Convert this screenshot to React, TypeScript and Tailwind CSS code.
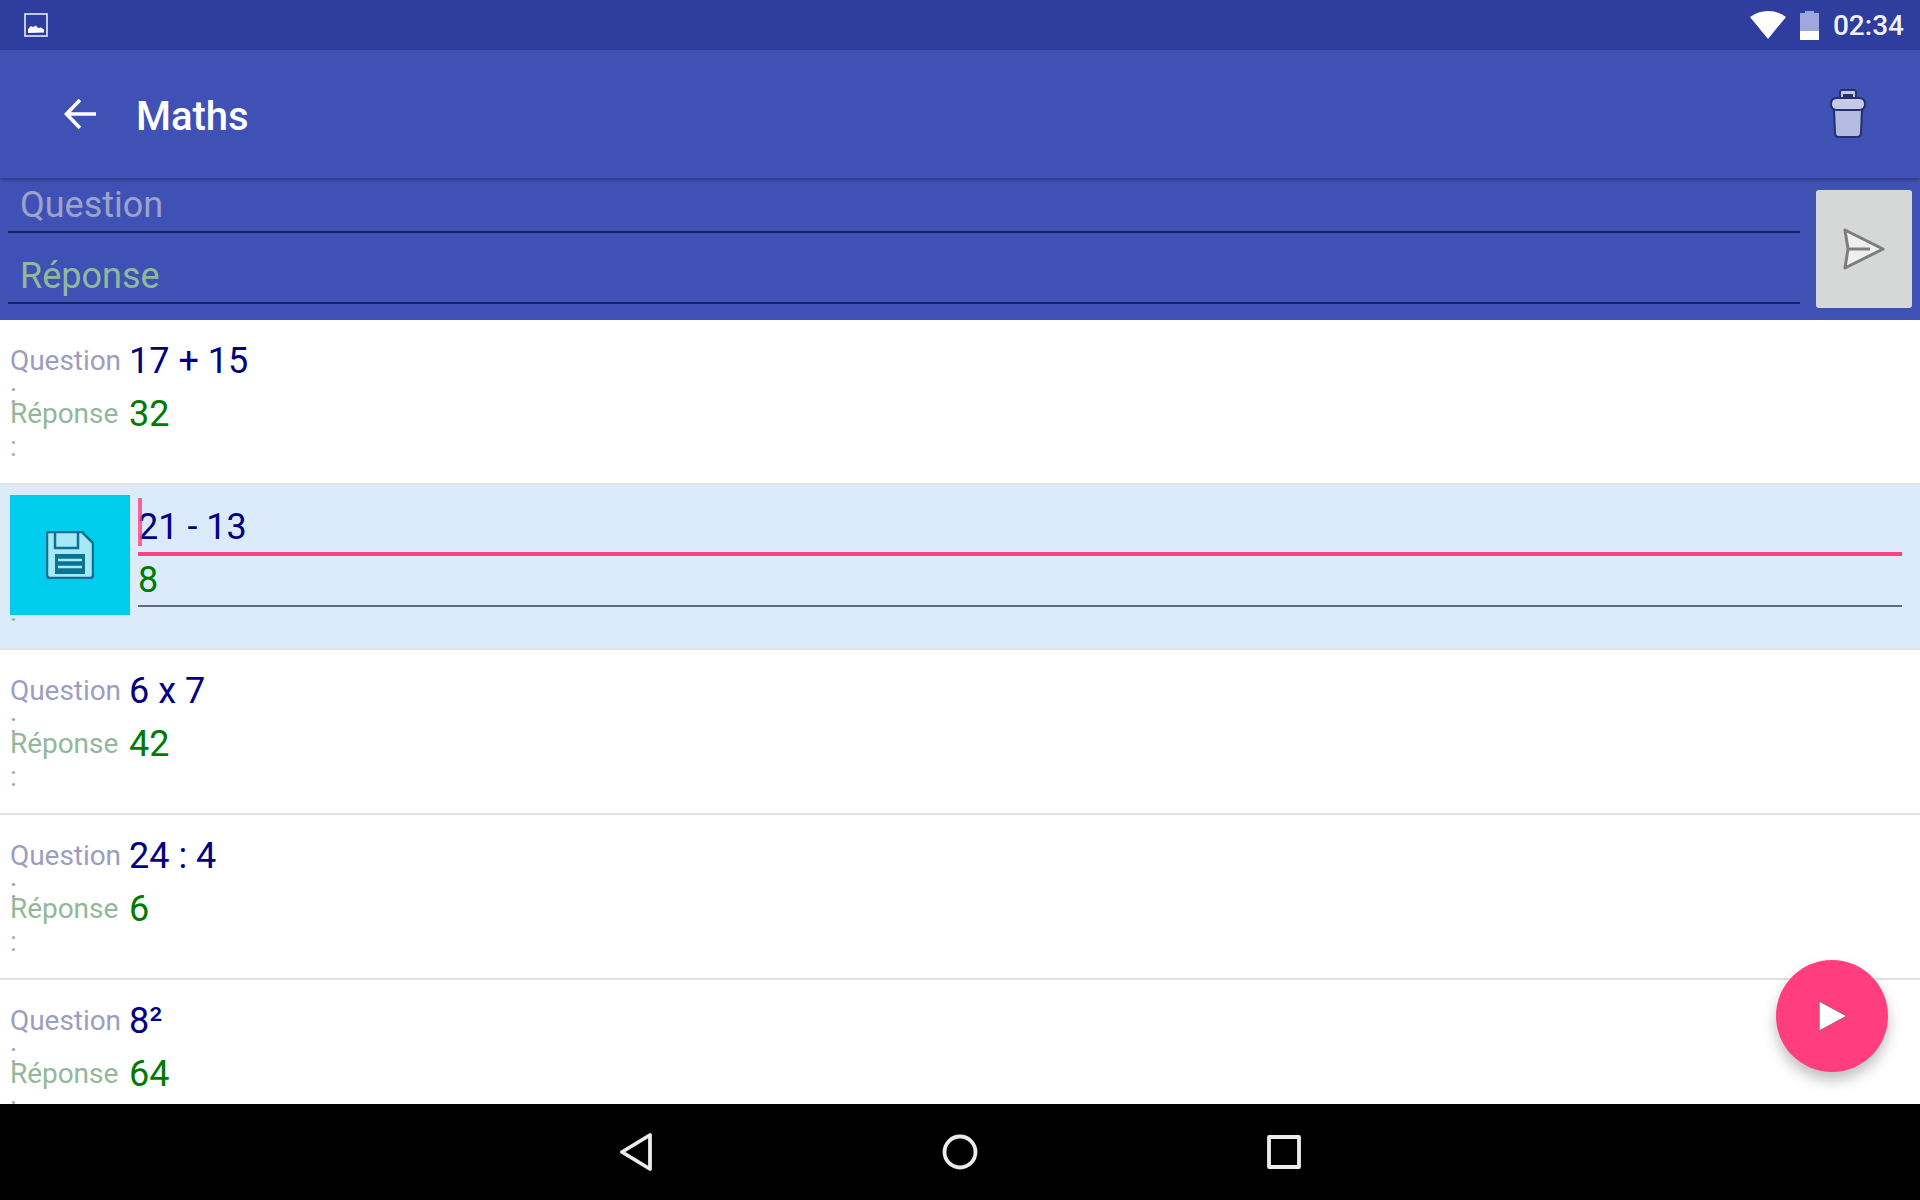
const cards = [
  { question: "17 + 15", answer: "32" },
  { question: "21 - 13", answer: "8", editing: true },
  { question: "6 x 7", answer: "42" },
  { question: "24 : 4", answer: "6" },
  { question: "8²", answer: "64" },
];

function StatusBar() {
  return (
    <div className="h-[50px] shrink-0 bg-[#2f3d9e] flex items-center pl-6 pr-4">
      <svg width="24" height="24" viewBox="0 0 24 24">
        <rect x="1" y="1" width="22" height="22" fill="none" stroke="#e8eaf6" strokeWidth="1.6" />
        <path d="M4 20v-4l3-3 2 1 3-1.500 2 2.500 3-.5 3 2v3z" fill="#fff" />
      </svg>
      <div className="ml-auto flex items-center">
        <svg width="36" height="28" viewBox="0 0 36 28">
          <path d="M18 28L0 6Q8 0 18 0T36 6z" fill="#fff" />
        </svg>
        <svg className="ml-[14px]" width="19" height="29" viewBox="0 0 19 29">
          <path d="M5 0h9v2h5v27H0V2h5z" fill="#9fa8da" />
          <rect x="0" y="20" width="19" height="9" fill="#fff" />
        </svg>
        <span className="ml-[14px] pt-[2px] text-[28px] leading-none font-medium text-white/95">02:34</span>
      </div>
    </div>
  );
}

function AppBar() {
  return (
    <div className="relative z-10 h-[128px] shrink-0 bg-[#3f51b5] shadow-[0_2px_4px_rgba(0,0,0,0.3)] flex items-center pl-16 pr-[54px]">
      <svg width="32" height="32" viewBox="0 0 32 32" fill="none" stroke="#fff" strokeWidth="3.6">
        <path d="M32 16H3M16 2L2.500 16 16 30" />
      </svg>
      <span className="ml-[40px] pt-[6px] text-[40px] leading-none font-medium text-white">Maths</span>
      <svg className="ml-auto" width="36" height="50" viewBox="0 0 36 50">
        <path d="M10 10V3q0-2 2-2h12q2 0 2 2v7" fill="#c5cae9" stroke="#26306e" strokeWidth="2" />
        <rect x="13" y="5" width="10" height="4" fill="#26306e" />
        <path d="M4 20l1 24q0 4 4 4h18q4 0 4-4l1-24z" fill="#b4bce4" stroke="#26306e" strokeWidth="2" />
        <path d="M1 15q0-6 6-6h22q6 0 6 6 0 6-6 6H7q-6 0-6-6z" fill="#c5cae9" stroke="#26306e" strokeWidth="2" />
      </svg>
    </div>
  );
}

function NewCardForm() {
  return (
    <div className="h-[142px] shrink-0 bg-[#3f51b5] flex pl-2 pr-2 pt-3">
      <div className="flex-1 -mt-3">
        <div className="h-[55px] border-b-2 border-[#14205f] pl-3 text-[36px] leading-[54px] text-[#9ba3cb]">Question</div>
        <div className="mt-[15px] h-[56px] border-b-2 border-[#14205f] pl-3 text-[36px] leading-[56px] text-[#90b99b]">Réponse</div>
      </div>
      <div className="ml-4 w-24 h-[118px] rounded-[3px] bg-[#d6d7d7] flex items-center justify-center">
        <svg width="42" height="42" viewBox="0 0 42 42">
          <path d="M2 2l38 19L2 40l3-19z" fill="#efefef" stroke="#7d7d7d" strokeWidth="3" strokeLinejoin="round" />
          <path d="M5 21h22" stroke="#7d7d7d" strokeWidth="3" />
        </svg>
      </div>
    </div>
  );
}

function SaveIcon() {
  return (
    <svg width="48" height="48" viewBox="0 0 48 48">
      <path d="M3 1h33l11 11v32q0 3-3 3H4q-3 0-3-3V3q0-2 2-2z" fill="#a5e8f6" stroke="#0b7391" strokeWidth="2.500" />
      <path d="M9 1v16h23V1" fill="none" stroke="#0b7391" strokeWidth="2.500" />
      <rect x="9" y="23" width="30" height="20" fill="#0b7391" />
      <path d="M12 29h24M12 36h24" stroke="#a5e8f6" strokeWidth="2.500" />
    </svg>
  );
}

function Card({ question, answer, editing }: { question: string; answer: string; editing?: boolean }) {
  return (
    <div className={`relative h-[165px] shrink-0 border-b-2 border-[#e2e2e2] pt-[17px] pl-[10px] ${editing ? "bg-[#dcebfb]" : "bg-white"}`}>
      <div className="flex h-[53px]">
        <div className="w-[120px] -mr-px text-[28px] tracking-[-0.05px] leading-[33px] pt-[7px] text-[#9c9dbf]">Question :</div>
        {!editing && <div className="text-[36px] leading-[48px] text-[#000080]">{question}</div>}
      </div>
      <div className="flex h-[53px]">
        <div className="w-[120px] -mr-px text-[28px] tracking-[-0.05px] leading-[33px] pt-[7px] text-[#93b79a]">Réponse :</div>
        {!editing && <div className="text-[36px] leading-[48px] text-[#007a00]">{answer}</div>}
      </div>
      {editing && (
        <>
          <div className="absolute left-[10px] top-[10px] w-[120px] h-[120px] bg-[#00ccee] flex items-center justify-center">
            <SaveIcon />
          </div>
          <div className="absolute left-[138px] right-[18px] top-[8px]">
            <div className="relative h-[63px] border-b-4 border-[#ff4081] text-[36px] leading-[68px] text-[#000080]">
              21 - 13
              <div className="absolute left-0 top-[5px] w-1 h-[48px] bg-[#ff4081]/80" />
            </div>
            <div className="h-[51px] border-b-2 border-[#5f6b7e] text-[36px] leading-[49px] text-[#007a00]">8</div>
          </div>
        </>
      )}
    </div>
  );
}

function NavBar() {
  return (
    <div className="h-24 shrink-0 bg-black flex items-center justify-center gap-[289px]">
      <svg width="34" height="38" viewBox="0 0 34 38" fill="none" stroke="#ececec" strokeWidth="3.800" strokeLinejoin="round">
        <path d="M31 2v34L3 19z" />
      </svg>
      <svg width="36" height="36" viewBox="0 0 36 36" fill="none" stroke="#ececec" strokeWidth="3.800">
        <circle cx="18" cy="18" r="15.500" />
      </svg>
      <svg width="34" height="34" viewBox="0 0 34 34" fill="none" stroke="#ececec" strokeWidth="3.800" strokeLinejoin="round">
        <rect x="2" y="2" width="30" height="30" />
      </svg>
    </div>
  );
}

export default function App() {
  return (
    <div className="relative w-[1920px] h-[1200px] overflow-hidden flex flex-col bg-white font-['Roboto',sans-serif]">
      <StatusBar />
      <AppBar />
      <NewCardForm />
      <div className="flex-1 overflow-hidden flex flex-col">
        {cards.map((c) => (
          <Card key={c.question} {...c} />
        ))}
      </div>
      <NavBar />
      {/* bouton lecture */}
      <div className="absolute left-[1776px] top-[960px] w-[112px] h-[112px] rounded-full bg-[#ff3d7f] shadow-[0_8px_14px_rgba(0,0,0,0.25)] flex items-center justify-center">
        <svg className="ml-[2px]" width="30" height="32" viewBox="0 0 28 30">
          <path d="M1 1l26 14L1 29z" fill="#fff" stroke="#b0587a" strokeWidth="1" />
        </svg>
      </div>
    </div>
  );
}
